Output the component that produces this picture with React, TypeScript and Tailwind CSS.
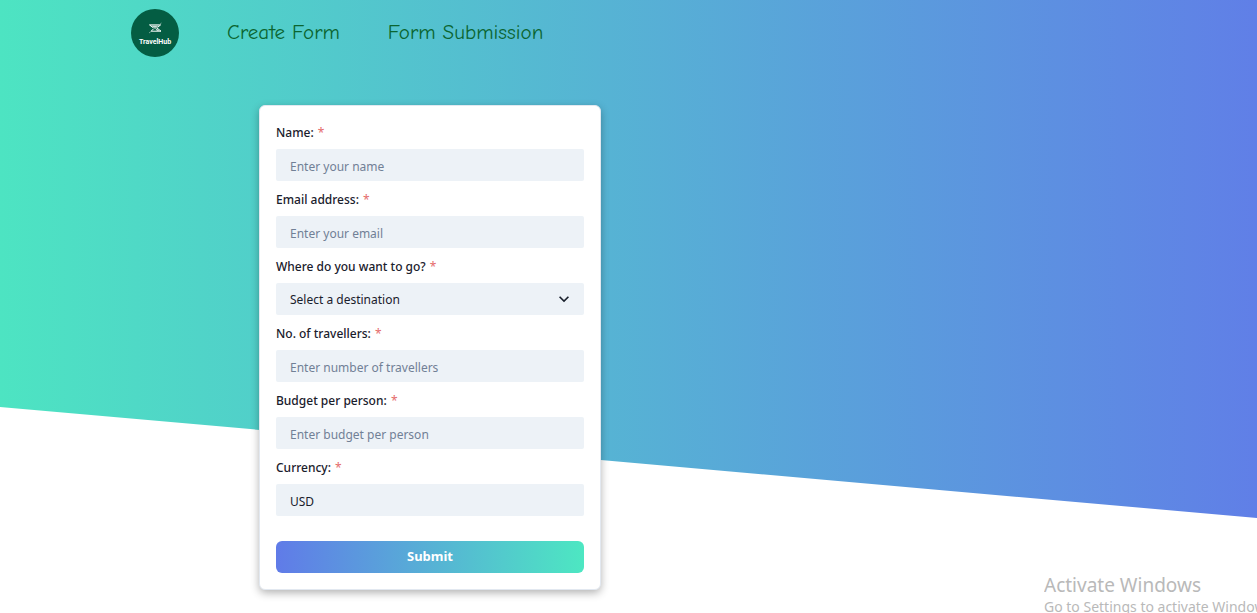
import React from "react";

type FieldProps = { id: string; label: string; children: React.ReactNode };

const control =
  "block h-8 w-full rounded-xs bg-[#edf2f7] px-3.5 pt-0.5 text-xs text-[#1a202c] outline-none placeholder:text-[#718096]";

function Field({ id, label, children }: FieldProps) {
  return (
    <div>
      <label htmlFor={id} className="mb-[5px] block text-xs leading-[22px] font-medium text-[#1a202c]">
        {label} <span className="pl-px text-xs font-normal text-[#e56b6b]">*</span>
      </label>
      {children}
    </div>
  );
}

function Logo() {
  return (
    <svg viewBox="0 0 48 48" className="size-12" role="img" aria-label="TravelHub">
      <circle cx="24" cy="24" r="24" fill="#045d43" />
      <path d="M18.5 15.9H29.6L26.5 18.4M18.5 15.9L22.5 19M20 22.2H30L25.5 18.6M20 22.2L22 20.4" stroke="#ffffff" strokeWidth="1" fill="none" />
      <path d="M20 16.6H28L25 18.8H22.8ZM23.5 18.2L28.8 22H26Z" fill="#c9ddd6" />
      <path d="M18 24L30.5 14" stroke="#8fb5a8" strokeWidth="0.8" fill="none" />
      <text
        x="24"
        y="34.5"
        textAnchor="middle"
        fontSize="7"
        fontWeight="700"
        fill="#ffffff"
        fontFamily="Roboto, sans-serif"
      >
        TravelHub
      </text>
    </svg>
  );
}

export default function App() {
  return (
    <div className="relative min-h-screen overflow-hidden bg-white font-['Noto_Sans',sans-serif]">
      <div className="absolute inset-x-0 top-0 h-[518px] bg-linear-[to_right,#4de4c2,#607fe7] [clip-path:polygon(0_0,100%_0,100%_100%,0_407px)]" />

      <div className="relative">
        <nav className="flex h-[66px] items-center gap-12 pl-[131px] font-['Comic_Sans_MS','Comic_Neue',cursive] text-[21px] text-[#0b6530]">
          <a href="#home">
            <Logo />
          </a>
          <a href="#create">Create Form</a>
          <a href="#submissions">Form Submission</a>
        </nav>

        <main className="mt-[39px] ml-[259px] w-[342px]">
          <form
            className="flex flex-col gap-2 rounded-md border border-[#e2e8f0] bg-white p-4 shadow-[0_3px_8px_rgba(0,0,0,0.3)]"
            onSubmit={(e) => e.preventDefault()}
          >
            <Field id="name" label="Name:">
              <input id="name" type="text" placeholder="Enter your name" className={control} />
            </Field>
            <Field id="email" label="Email address:">
              <input id="email" type="email" placeholder="Enter your email" className={control} />
            </Field>
            <Field id="destination" label="Where do you want to go?">
              <div className="relative">
                <select id="destination" defaultValue="" className={`${control} appearance-none`}>
                  <option value="">Select a destination</option>
                  <option>India</option>
                  <option>Europe</option>
                </select>
                <svg viewBox="0 0 24 24" className="pointer-events-none absolute top-1.5 right-2.5 size-5" fill="#1a202c">
                  <path d="M16.59 8.59L12 13.17 7.41 8.59 6 10l6 6 6-6z" />
                </svg>
              </div>
            </Field>
            <Field id="travellers" label="No. of travellers:">
              <input id="travellers" type="number" placeholder="Enter number of travellers" className={control} />
            </Field>
            <Field id="budget" label="Budget per person:">
              <input id="budget" type="number" placeholder="Enter budget per person" className={control} />
            </Field>
            <Field id="currency" label="Currency:">
              <input id="currency" type="text" defaultValue="USD" readOnly className={control} />
            </Field>
            <button
              type="submit"
              className="mt-[17px] h-8 rounded-md bg-linear-[to_right,#607be8,#4de7c2] text-[13px] font-bold text-white"
            >
              Submit
            </button>
          </form>
        </main>
      </div>

      <aside className="absolute right-0 bottom-0 h-10 w-[213px] overflow-hidden whitespace-nowrap text-[#b9b9b9]">
        <p className="text-[19px] leading-6">Activate Windows</p>
        <p className="text-sm leading-5">Go to Settings to activate Windows.</p>
      </aside>
    </div>
  );
}
